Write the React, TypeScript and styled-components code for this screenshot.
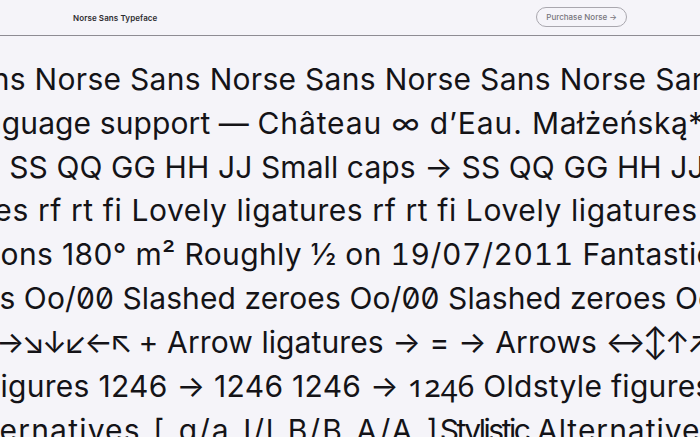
import styled, { createGlobalStyle } from 'styled-components'

const GlobalStyle = createGlobalStyle`
  html, body {
    margin: 0;
    padding: 0;
    background: #f5f4f9;
  }
  body {
    font-family: Inter, "Noto Sans", sans-serif;
    color: #141317;
    overflow: hidden;
  }
`

const Page = styled.div`
  width: 700px;
  height: 437px;
  overflow: hidden;
  display: flex;
  flex-direction: column;
`

const Header = styled.header`
  height: 36px;
  flex-shrink: 0;
  display: flex;
  align-items: center;
  justify-content: space-between;
  padding: 0 73px;
  border-bottom: 1px solid #8e8c93;
  box-sizing: border-box;
`

const Brand = styled.div`
  font-size: 8px;
  font-weight: 600;
  color: #2c2b30;
  letter-spacing: 0.1px;
`

const BuyButton = styled.button`
  font-family: inherit;
  font-size: 8px;
  font-weight: 500;
  color: #77757c;
  background: transparent;
  border: 1px solid #a9a7ae;
  border-radius: 999px;
  height: 20px;
  padding: 0 9px;
  margin-top: -1px;
  cursor: pointer;
`

const Specimen = styled.main`
  padding-top: 22px;
  display: flex;
  flex-direction: column;
  overflow: hidden;
`

const Line = styled.div<{ $shift: number; $track?: number }>`
  font-size: 30px;
  line-height: 43.75px;
  letter-spacing: ${(p) => p.$track ?? 0.1}px;
  white-space: nowrap;
  margin-left: ${(p) => p.$shift}px;
`

// a stretch of a line set with its own tracking, to follow the wider/narrower glyphs of the specimen
const Run = styled.span<{ $track: number; $word?: number }>`
  letter-spacing: ${(p) => p.$track}px;
  word-spacing: ${(p) => p.$word ?? 0}px;
`

const Zero = styled.span`
  font-feature-settings: 'zero' 1;
`

const Tabular = styled.span`
  font-variant-numeric: tabular-nums;
  letter-spacing: 0.6px;
`

const Oldstyle = styled.span`
  font-family: 'Noto Sans', sans-serif;
  font-variant-numeric: oldstyle-nums;
`

const Arrows = styled.span`
  letter-spacing: -3px;
`

export default function App() {
  return (
    <Page>
      <GlobalStyle />
      <Header>
        <Brand>Norse Sans Typeface</Brand>
        <BuyButton>Purchase Norse →</BuyButton>
      </Header>
      <Specimen>
        <Line $shift={-45} $track={0.3}>
          Sans Norse Sans Norse Sans Norse Sans Norse Sans Norse Sans
        </Line>
        <Line $shift={-50}>
          Language support — <Run $track={0.9}>Château ∞ d’Eau. </Run>
          <Run $track={0.5}>Małżeńską* “Norse”</Run>
        </Line>
        <Line $shift={-28} $track={0.1}>
          → SS QQ GG HH JJ Small caps → SS QQ GG HH JJ Small caps
        </Line>
        <Line $shift={-98} $track={0.6}>
          ligatures rf rt fi Lovely ligatures rf rt fi Lovely ligatures rf
        </Line>
        <Line $shift={-75} $track={0.35}>
          fractions 180° m² Roughly ½ on <Tabular>19/07/2011</Tabular> Fantastic fractions
        </Line>
        <Line $shift={-81}>
          zeroes Oo/<Zero>00</Zero> Slashed zeroes Oo/<Zero>00</Zero> Slashed zeroes Oo/<Zero>00</Zero>
        </Line>
        <Line $shift={-4}>
          <Arrows>→↘↓↙←↖</Arrows> + Arrow ligatures → = → Arrows <Arrows>↔↕↑↗→↘↓↙←↖</Arrows>
        </Line>
        <Line $shift={-11} $track={0.3}>
          figures 1246 → 1246 1246 → <Oldstyle>1246</Oldstyle> Oldstyle figures
        </Line>
        <Line $shift={-42}>
          <Run $track={1.2}>Alternatives</Run>
          <Run $track={2} $word={2}> [ g/a I/l B/B A/A ]</Run>
          <Run $track={-2.5}>Stylistic</Run> <Run $track={1}>Alternatives</Run>
        </Line>
      </Specimen>
    </Page>
  )
}
